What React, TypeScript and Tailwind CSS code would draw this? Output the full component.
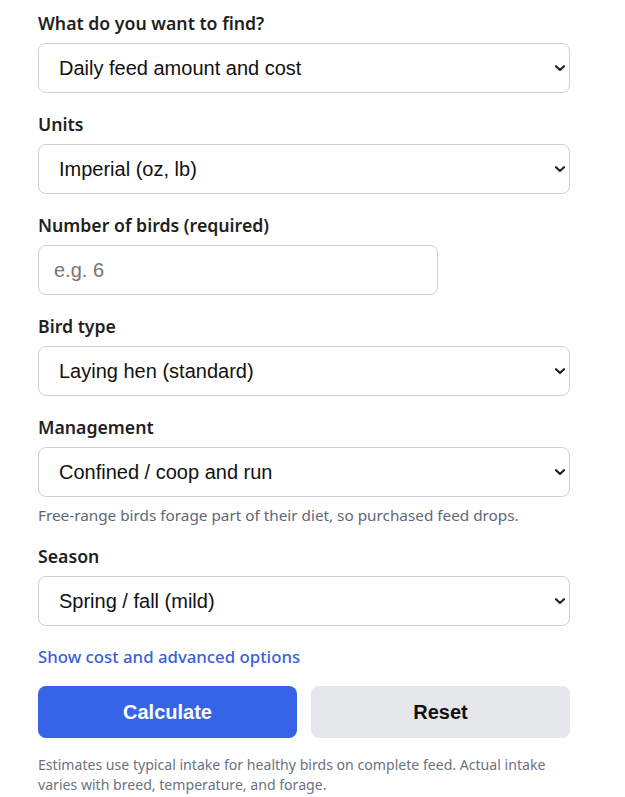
import { useState } from "react";

const labelCls =
  "block text-[17.7px] leading-6 font-semibold text-[#1f1f1f] mb-2 font-['Noto_Sans',sans-serif]";
const fieldCls =
  "w-full h-[50px] rounded-lg border border-[#cbd2dc] bg-white pl-[20px] pr-10 text-[20px] text-[#111] font-['Liberation_Sans',Arial,sans-serif] outline-none appearance-none";

function Chevron() {
  return (
    <svg
      className="pointer-events-none absolute right-[4px] top-1/2 -translate-y-1/2"
      width="12"
      height="12"
      viewBox="0 0 12 12"
      fill="none"
    >
      <path d="M2 4.2 6 8l4-3.8" stroke="#222" strokeWidth="2.2" strokeLinecap="round" strokeLinejoin="round" />
    </svg>
  );
}

function SelectField({ label, options, help }: { label: string; options: string[]; help?: string }) {
  return (
    <div>
      <label className={labelCls}>{label}</label>
      <div className="relative">
        <select className={fieldCls} defaultValue={options[0]}>
          {options.map((o) => (
            <option key={o}>{o}</option>
          ))}
        </select>
        <Chevron />
      </div>
      {help && (
        <p className="mt-2 text-[15.3px] leading-5 text-[#5f6775] font-['Noto_Sans',sans-serif]">{help}</p>
      )}
    </div>
  );
}

export default function App() {
  const [birds, setBirds] = useState("");

  return (
    <main className="min-h-screen bg-white">
      <form className="w-[532px] ml-[38px] pt-[11px] flex flex-col gap-[19px]" onSubmit={(e) => e.preventDefault()}>
        <SelectField
          label="What do you want to find?"
          options={["Daily feed amount and cost", "Feed needed for a period"]}
        />
        <SelectField label="Units" options={["Imperial (oz, lb)", "Metric (g, kg)"]} />

        <div>
          <label className={labelCls}>Number of birds (required)</label>
          <input
            className="w-[400px] h-[50px] rounded-lg border border-[#cbd2dc] bg-white pl-[15px] text-[20px] text-[#111] placeholder:text-[#757575] font-['Liberation_Sans',Arial,sans-serif] outline-none"
            placeholder="e.g. 6"
            value={birds}
            onChange={(e) => setBirds(e.target.value)}
          />
        </div>

        <SelectField
          label="Bird type"
          options={["Laying hen (standard)", "Bantam", "Broiler", "Duck"]}
        />
        <SelectField
          label="Management"
          options={["Confined / coop and run", "Free-range"]}
          help="Free-range birds forage part of their diet, so purchased feed drops."
        />
        <SelectField
          label="Season"
          options={["Spring / fall (mild)", "Summer (hot)", "Winter (cold)"]}
        />

        <div className="flex flex-col">
          <button
            type="button"
            className="self-start text-[16.8px] leading-6 font-medium text-[#3b5fdc] font-['Noto_Sans',sans-serif]"
          >
            Show cost and advanced options
          </button>

          <div className="mt-[17px] grid grid-cols-2 gap-[14px]">
            <button
              type="submit"
              className="h-[52px] rounded-lg bg-[#3565e6] text-white text-[20px] font-bold font-['Liberation_Sans',Arial,sans-serif]"
            >
              Calculate
            </button>
            <button
              type="reset"
              className="h-[52px] rounded-lg bg-[#e5e7eb] text-[#111] text-[20px] font-bold font-['Liberation_Sans',Arial,sans-serif]"
            >
              Reset
            </button>
          </div>

          <p className="mt-[17px] text-[14.1px] leading-5 text-[#6b7280] font-['Noto_Sans',sans-serif]">
            Estimates use typical intake for healthy birds on complete feed. Actual intake varies with breed,
            temperature, and forage.
          </p>
        </div>
      </form>
    </main>
  );
}
